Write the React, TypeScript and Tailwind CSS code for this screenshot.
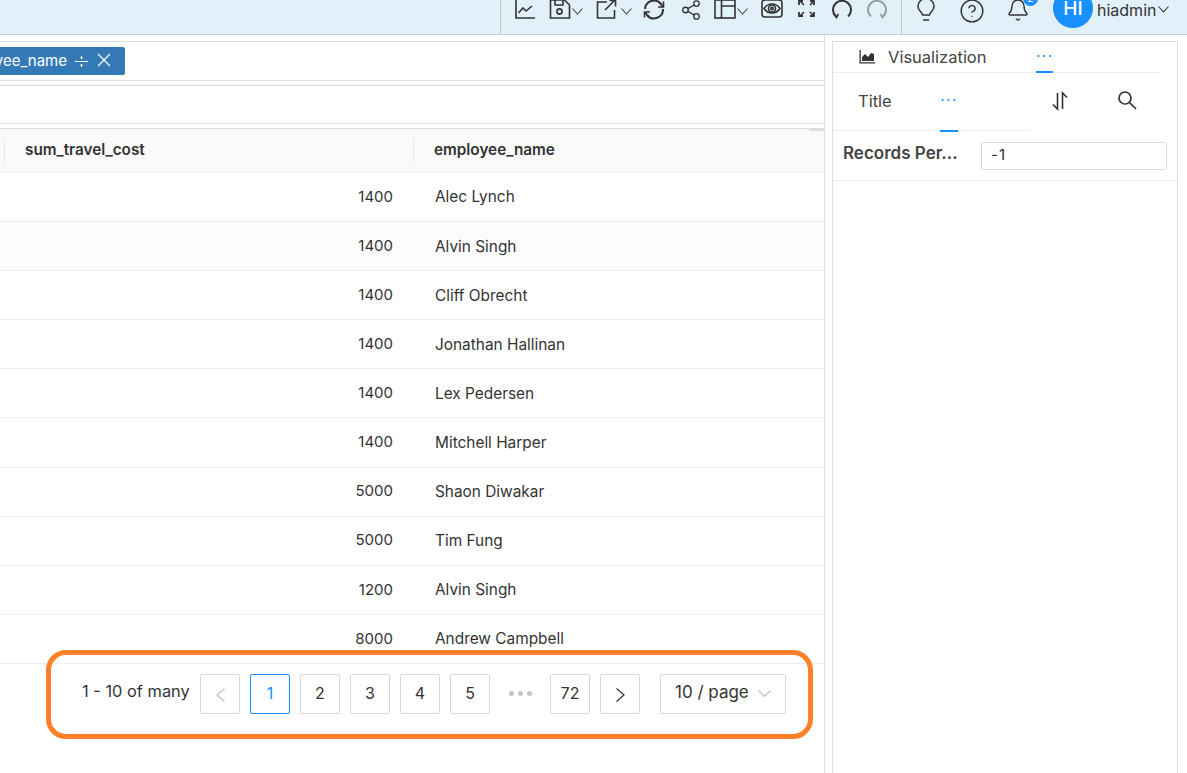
import { Bell, CircleHelp, Share2 } from 'lucide-react'

const rows = [
  ['1400', 'Alec Lynch'],
  ['1400', 'Alvin Singh'],
  ['1400', 'Cliff Obrecht'],
  ['1400', 'Jonathan Hallinan'],
  ['1400', 'Lex Pedersen'],
  ['1400', 'Mitchell Harper'],
  ['5000', 'Shaon Diwakar'],
  ['5000', 'Tim Fung'],
  ['1200', 'Alvin Singh'],
  ['8000', 'Andrew Campbell'],
]

const ink = '#333'

function Chev({ className = '', color = '#444' }: { className?: string; color?: string }) {
  return (
    <svg width="11" height="7" viewBox="0 0 11 7" fill="none" stroke={color} strokeWidth="1.1" className={`shrink-0 ${className}`}>
      <path d="M0.500 0.500l5 5.500 5-5.500" />
    </svg>
  )
}

function ToolIcon({ children, w = 22 }: { children: React.ReactNode; w?: number }) {
  return (
    <svg width={w} height="22" viewBox={`0 0 ${w} 22`} fill="none" stroke={ink} strokeWidth="1.6" className="shrink-0">
      {children}
    </svg>
  )
}

function Toolbar() {
  return (
    <div className="ml-[500px] w-[687px] h-[34px] border-l border-[#c4c8cb] flex items-start">
      <div className="flex items-center h-[20px] shrink-0">
        <div className="ml-[13px]">
          <ToolIcon>
            <path d="M2 1v18h19" />
            <path d="M4.500 14l4.500-5 3 3 6-5" />
          </ToolIcon>
        </div>
        <div className="ml-[13px] flex items-center">
          <ToolIcon>
            <path d="M1.500 1h14l5 5v13h-19z" />
            <path d="M6 1v5h8V1" />
            <circle cx="10.500" cy="12.500" r="2.600" />
          </ToolIcon>
          <Chev className="ml-[1px] mt-[2px]" />
        </div>
        <div className="ml-[13px] flex items-center">
          <ToolIcon>
            <path d="M11 3H1.500v16h17v-8" />
            <path d="M9 11l9-9M13.500 1.500h6v6" />
          </ToolIcon>
          <Chev className="ml-[3px] mt-[2px]" />
        </div>
        <div className="ml-[11px]">
          <ToolIcon>
            <path d="M2 10a9 9 0 0 1 16-5l2 3" strokeWidth="2" />
            <path d="M20 10a9 9 0 0 1-16 6l-2-3" strokeWidth="2" />
            <path d="M20.500 2.500v5.500h-5.500M1.500 18.500v-5.500h5.500" />
          </ToolIcon>
        </div>
        <Share2 className="ml-[15px] w-[22px] h-[22px] text-[#333]" strokeWidth={1.400} />
        <div className="ml-[12px] flex items-center">
          <ToolIcon>
            <rect x="1" y="1" width="20" height="18" />
            <path d="M7.500 1v18M7.500 7H21" />
          </ToolIcon>
          <Chev className="ml-[1px] mt-[2px]" />
        </div>
        <div className="ml-[13px]">
          <ToolIcon>
            <rect x="1" y="1" width="20" height="17" rx="3" />
            <path d="M3 9.500c4-6 12-6 16 0-4 6-12 6-16 0z" />
            <circle cx="11" cy="9.500" r="3.500" />
            <circle cx="11" cy="9.500" r="1.200" />
          </ToolIcon>
        </div>
        <div className="ml-[14px]">
          <ToolIcon w={20}>
            <path d="M3 2l4 4M13 13l4 4M17 2l-4 4M7 13l-4 4" />
            <path d="M2 6V2h4M13 2h4v4M17 13v4h-4M6 17H2v-4" strokeWidth="1.800" />
          </ToolIcon>
        </div>
        <div className="ml-[14px]">
          <ToolIcon>
            <path d="M5 17.500A9 9 0 1 1 17 17.500" strokeWidth="2" />
            <path d="M2.500 14.500l3 4 2-3.500" />
          </ToolIcon>
        </div>
        <div className="ml-[13px]">
          <svg width="22" height="22" viewBox="0 0 22 22" fill="none" stroke="#9a9c9d" strokeWidth="2" className="shrink-0">
            <path d="M5 17.500A9 9 0 1 1 17 17.500" />
            <path d="M19.500 14.500l-3 4-2-3.500" strokeWidth="1.600" />
          </svg>
        </div>
      </div>
      <div className="ml-[13px] h-[34px] border-l border-[#c4c8cb] w-0 shrink-0" />
      <svg width="22" height="22" viewBox="0 0 22 22" fill="none" stroke={ink} strokeWidth="1.500" className="ml-[13px] shrink-0">
        <path d="M7.500 15c-.5-3-4.500-4.500-4.500-8.500a8 8 0 0 1 16 0c0 4-4 5.500-4.500 8.500z" />
        <path d="M8 20h6" />
      </svg>
      <CircleHelp className="ml-[22px] -mt-[2px] w-[26px] h-[26px] text-[#333] shrink-0" strokeWidth={1.300} />
      <div className="ml-[21px] relative shrink-0">
        <Bell className="w-[24px] h-[24px] -mt-[2px] text-[#333]" strokeWidth={1.400} />
        <span className="absolute -top-[9px] left-[17px] w-[15px] h-[15px] rounded-full bg-[#1890ff] text-white text-[10px] leading-[15px] text-center">2</span>
      </div>
      <div className="ml-[23px] w-[40px] h-[40px] -mt-[12px] pt-[2px] rounded-full bg-[#1890ff] text-white text-[19px] font-medium flex items-center justify-center shrink-0">HI</div>
      <span className="ml-[4px] text-[16px] leading-[20px] text-[#333] shrink-0">hiadmin</span>
      <Chev className="ml-[2px] mt-[6px]" color="#333" />
    </div>
  )
}

function VisualTabs() {
  return (
    <>
      <div className="h-[31px] w-[327px] border-b border-[#eeeeee] flex items-center">
        <svg width="16" height="14" viewBox="0 0 16 14" className="ml-[26px] shrink-0" fill="#333">
          <path d="M0.500 0v13.500H16v-1.300H1.800V0z" />
          <path d="M3 11V7l3-3 3 3 3-4 3 1v7z" />
        </svg>
        <span className="ml-[13px] w-[98px] text-[16.500px] text-[#444] whitespace-nowrap">Visualization</span>
        <span className="ml-[50px] w-[17px] h-[31px] border-b-2 border-[#1890ff] -mb-[1px] text-[#1890ff] text-[15px] tracking-[1.500px] leading-[27px] text-center">···</span>
      </div>
      <div className="h-[58px] flex items-start">
        <div className="w-[197px] h-[58px] border-b border-[#eeeeee] flex items-start">
          <span className="ml-[25px] w-[33px] mt-[16px] text-[16.500px] leading-[24px] text-[#444]">Title</span>
          <span className="ml-[49px] h-[57px] w-[18px] border-b-2 border-[#1890ff] box-content text-[#1890ff] text-[15px] tracking-[1.500px] leading-[54px] text-center">···</span>
        </div>
        <svg width="18" height="20" viewBox="0 0 18 20" fill="none" stroke="#333" strokeWidth="1.600" className="ml-[21px] mt-[18px] shrink-0">
          <path d="M6.500 2v16L2 13.500" />
          <path d="M11.500 18V2l4.500 4.500" />
        </svg>
        <svg width="19" height="19" viewBox="0 0 19 19" fill="none" stroke="#333" strokeWidth="1.700" className="ml-[49px] mt-[18px] shrink-0">
          <circle cx="7" cy="7" r="6" />
          <path d="M11.500 11.500L18 18" />
        </svg>
      </div>
    </>
  )
}

export default function App() {
  return (
    <div className="relative w-[1187px] h-[773px] overflow-hidden bg-white font-['Inter','Liberation_Sans',sans-serif] text-[15px] text-[#333]">
      <div className="h-[35px] bg-[#e1f0f9] border-b border-[#c8cbcd] overflow-hidden">
        <Toolbar />
      </div>

      <div className="flex h-[738px]">
        <div className="w-[825px] shrink-0 border-r border-[#dddddd] pt-[6px]">
          <div className="h-[40px] border-y border-[#dddddd] flex items-center">
            <div className="w-[125px] h-[28px] rounded-r-[2px] bg-[#337ab7] text-white flex items-center justify-end pr-[14px] overflow-hidden whitespace-nowrap">
              <span className="text-[15px] shrink-0">employee_name</span>
              <svg width="13" height="15" viewBox="0 0 13 15" fill="none" stroke="#fff" strokeWidth="1" className="ml-[8px] shrink-0">
                <path d="M0 7.500h13M6.500 2v3M6.500 10v3" />
                <path d="M5.500 3.500l1 1.500 1-1.500M5.500 11.500l1-1.500 1 1.500" />
              </svg>
              <svg width="14" height="14" viewBox="0 0 14 14" fill="none" stroke="#fff" strokeWidth="1.200" className="ml-[9px] -mt-[3px] shrink-0">
                <path d="M1 1l12 12M13 1L1 13" />
              </svg>
            </div>
          </div>
          <div className="mt-[4px] h-[39px] border-y border-[#dddddd]" />
          <div className="mt-[4px] border-t border-[#dddddd] relative">
            <div className="absolute right-0 -top-[1px] w-[15px] h-[3px] bg-[#dddddd]" />
            <div className="h-[44px] bg-[#fafafa] border-b border-[#eeeeee] grid grid-cols-[4px_409px_1fr] items-center font-semibold text-[15.300px]">
              <div className="col-start-2 h-[24px] border-l border-[#e8e8e8] pl-[20px] leading-[22px] whitespace-nowrap">sum_travel_cost</div>
              <div className="h-[24px] border-l border-[#e8e8e8] pl-[20px] leading-[22px] whitespace-nowrap">employee_name</div>
            </div>
            {rows.map((r, i) => (
              <div key={i} className={`h-[49.100px] border-b border-[#eeeeee] grid grid-cols-[4px_409px_1fr] items-center ${i === 1 ? 'bg-[#fcfcfc]' : ''}`}>
                <div className="col-start-2 text-right pr-[20px]">{r[0]}</div>
                <div className="pl-[22px] text-[15.400px]">{r[1]}</div>
              </div>
            ))}
          </div>
          <div className="mt-[10px] flex items-center h-[40px] pl-[82px] text-[16px]">
            <span className="w-[118px] -mt-[5px] text-[16.400px] whitespace-nowrap">1 - 10 of many</span>
            <div className="flex gap-[10px] items-center">
              <button className="w-[40px] h-[40px] rounded-[2px] border border-[#d9d9d9] flex items-center justify-center">
                <svg width="9" height="14" viewBox="0 0 9 14" fill="none" stroke="#c4c4c4" strokeWidth="1.200" className="mt-[2px]">
                  <path d="M8.500 0.500L1 7l7.500 6.500" />
                </svg>
              </button>
              <button className="w-[40px] h-[40px] rounded-[2px] border border-[#1890ff] text-[#1890ff] pb-[2px]">1</button>
              {['2', '3', '4', '5'].map((p) => (
                <button key={p} className="w-[40px] h-[40px] rounded-[2px] border border-[#d9d9d9] pb-[2px]">{p}</button>
              ))}
              <div className="w-[40px] flex justify-center gap-[4px]">
                <span className="w-[5px] h-[5px] rounded-full bg-[#c4c4c4]" />
                <span className="w-[5px] h-[5px] rounded-full bg-[#c4c4c4]" />
                <span className="w-[5px] h-[5px] rounded-full bg-[#c4c4c4]" />
              </div>
              <button className="w-[40px] h-[40px] rounded-[2px] border border-[#d9d9d9] pb-[2px]">72</button>
              <button className="w-[40px] h-[40px] rounded-[2px] border border-[#d9d9d9] flex items-center justify-center">
                <svg width="9" height="14" viewBox="0 0 9 14" fill="none" stroke="#333" strokeWidth="1.200" className="mt-[2px]">
                  <path d="M0.500 0.500L8 7l-7.500 6.500" />
                </svg>
              </button>
              <div className="ml-[10px] w-[126px] h-[40px] rounded-[2px] border border-[#d9d9d9] flex items-center pl-[14px]">
                <span className="w-[74px] -mt-[2px] whitespace-nowrap text-[17px]">10 / page</span>
                <svg width="13" height="7" viewBox="0 0 13 7" fill="none" stroke="#bdbdbd" strokeWidth="1.100" className="ml-[9px]">
                  <path d="M0.500 0.500l6 6 6-6" />
                </svg>
              </div>
            </div>
          </div>
        </div>

        <div className="ml-[7px] mt-[6px] w-[346px] border-x border-t border-[#dddddd]">
          <VisualTabs />
          <div className="h-[50px] border-b border-[#eeeeee] flex items-center">
            <span className="ml-[10px] w-[138px] -mt-[3px] font-semibold text-[17px] text-[#444] whitespace-nowrap">Records Per...</span>
            <div className="w-[186px] h-[28px] rounded-[2px] border border-[#d9d9d9] pl-[9px] leading-[24px] tracking-[1px]">-1</div>
          </div>
        </div>
      </div>

      <div className="absolute left-[46px] top-[650px] w-[767px] h-[89px] rounded-[20px] border-[5px] border-[#ff8028]" />
    </div>
  )
}
